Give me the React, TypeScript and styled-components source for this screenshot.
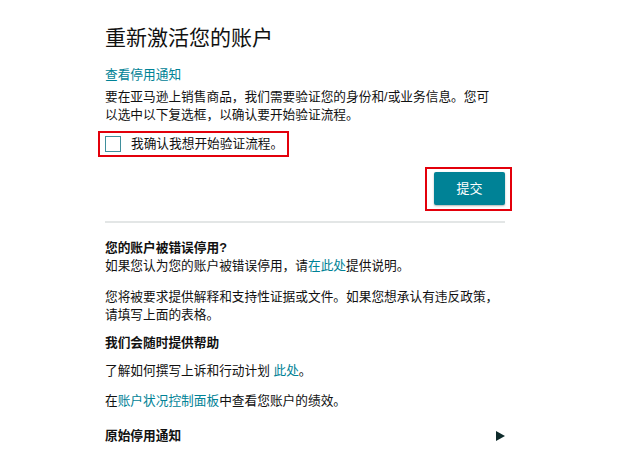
import styled, { createGlobalStyle } from 'styled-components';
import React, { useState } from 'react';

const GlobalStyle = createGlobalStyle`
  body {
    margin: 0;
    background: #fff;
    font-family: Arial, "Liberation Sans", "Noto Sans CJK SC", sans-serif;
    color: #111;
  }
`

function App() {
  const [checked, setChecked] = useState(false);

  return (
    <>
      <GlobalStyle />
      <Page>
        <Title>重新激活您的账户</Title>
        <Link href="#">查看停用通知</Link>
        <Text gap={4}>要在亚马逊上销售商品，我们需要验证您的身份和/或业务信息。您可以选中以下复选框，以确认要开始验证流程。</Text>
        <Highlight>
          <CheckRow onClick={() => setChecked(!checked)}>
            <Box checked={checked} />
            <span>我确认我想开始验证流程。</span>
          </CheckRow>
        </Highlight>
        <Actions>
          <ButtonFrame>
            <Submit>提交</Submit>
          </ButtonFrame>
        </Actions>
        <Divider />
        <Section>
          <Heading>您的账户被错误停用?</Heading>
          <Text gap={0}>如果您认为您的账户被错误停用，请<Link href="#">在此处</Link>提供说明。</Text>
        </Section>
        <Text gap={13}>您将被要求提供解释和支持性证据或文件。如果您想承认有违反政策，请填写上面的表格。</Text>
        <Heading gap={10}>我们会随时提供帮助</Heading>
        <Text gap={10}>了解如何撰写上诉和行动计划 <Link href="#">此处</Link>。</Text>
        <Text gap={12}>在<Link href="#">账户状况控制面板</Link>中查看您账户的绩效。</Text>
        <Expander>
          <Heading>原始停用通知</Heading>
          <svg width="9" height="10" viewBox="0 0 9 10">
            <path d="M0 0 L9 5 L0 10 Z" fill="#0f2b2b" />
          </svg>
        </Expander>
      </Page>
    </>
  );
}

export default App;

const Page = styled.div`
  width: 400px;
  margin-left: 105px;
  padding-top: 24px;
  font-size: 12.7px;
  line-height: 18px;
`

const Title = styled.h1`
  margin: 0 0 14px;
  font-size: 21px;
  line-height: 28px;
  font-weight: 400;
  color: #111;
`

const Link = styled.a`
  color: #008296;
  text-decoration: none;
`

const Text = styled.p<{ gap?: number }>`
  max-width: 395px;
  margin: ${(p) => p.gap ?? 8}px 0 0;
  color: #111;
`

const Highlight = styled.div`
  width: fit-content;
  margin: 7px 0 0 -7px;
  padding: 2px 4px 2px 5px;
  border: 2px solid #e3000b;
`

const CheckRow = styled.label`
  display: flex;
  align-items: center;
  gap: 10px;
  cursor: pointer;
`

const Box = styled.span<{ checked: boolean }>`
  width: 14px;
  height: 14px;
  border: 1px solid #3f8f9c;
  background: ${(p) => (p.checked ? '#008296' : '#fff')};
`

const Actions = styled.div`
  display: flex;
  justify-content: flex-end;
  margin-top: 10px;
`

const ButtonFrame = styled.div`
  margin-right: -7px;
  padding: 3px 5px 4px 7px;
  border: 2px solid #e3000b;
`

const Submit = styled.button`
  display: block;
  width: 71px;
  height: 33px;
  border: none;
  border-radius: 2px;
  background: #008296;
  color: #fff;
  font: inherit;
  font-size: 13px;
  box-shadow: 0 1px 2px rgba(0, 0, 0, 0.3);
`

const Divider = styled.hr`
  margin: 10px 0 0;
  border: none;
  height: 2px;
  background: #e3e6e6;
`

const Section = styled.div`
  margin-top: 16px;
`

const Heading = styled.h3<{ gap?: number }>`
  margin: ${(p) => p.gap ?? 0}px 0 0;
  font-size: 12.7px;
  line-height: 18px;
  font-weight: 700;
  color: #111;
`

const Expander = styled.div`
  display: flex;
  justify-content: space-between;
  align-items: center;
  margin-top: 17px;
`
